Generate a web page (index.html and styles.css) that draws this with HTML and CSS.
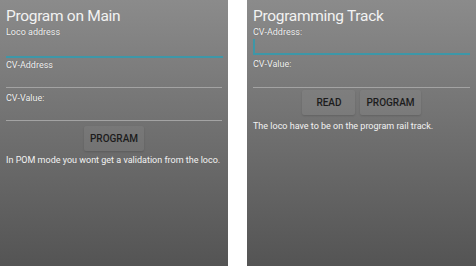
FILE: index.html
```html
<!DOCTYPE html>
<html lang="en">
<head>
    <meta charset="UTF-8">
    <meta name="viewport" content="width=device-width, initial-scale=1.0">
    <title>Programming</title>
    <link rel="stylesheet" href="styles.css">
</head>
<body>
    <div class="panel panel-main">
        <h1>Program on Main</h1>
        <label class="label">Loco address</label>
        <div class="field field-focus field-loco"></div>
        <label class="label">CV-Address</label>
        <div class="field field-cv"></div>
        <label class="label">CV-Value:</label>
        <div class="field field-cv"></div>
        <div class="buttons">
            <button class="btn btn-wide">PROGRAM</button>
        </div>
        <p class="note">In POM mode you wont get a validation from the loco.</p>
    </div>
    <div class="panel panel-track">
        <h1>Programming Track</h1>
        <label class="label">CV-Address:</label>
        <div class="field field-focus field-box"></div>
        <label class="label">CV-Value:</label>
        <div class="field field-short"></div>
        <div class="buttons buttons-track">
            <button class="btn">READ</button>
            <button class="btn btn-wide">PROGRAM</button>
        </div>
        <p class="note note-track">The loco have to be on the program rail track.</p>
    </div>
</body>
</html>
```

FILE: styles.css
```css
body {
    margin: 0;
    height: 266px;
    display: flex;
    gap: 19px;
    background-color: #fff;
    font-family: Roboto, 'Noto Sans', sans-serif;
    overflow: hidden;
}
.panel {
    display: flex;
    flex-direction: column;
    padding: 6px 6px 0 6px;
    background: linear-gradient(to bottom, #8b8b8b, #545454);
    color: #f2f2f2;
}
.panel-main {
    width: 216px;
}
.panel-track {
    flex: 1;
}
h1 {
    margin: 0;
    font-size: 15.5px;
    font-weight: 400;
    letter-spacing: -0.3px;
    line-height: 20px;
}
.label {
    display: block;
    font-size: 9px;
    line-height: 13px;
    text-shadow: 0 0 1px rgba(0,0,0,0.3);
}
.field {
    border-bottom: 1px solid #a3a3a3;
}
.field-focus {
    border-bottom: 2px solid #3d97a8;
}
.field-loco {
    height: 17px;
    margin-bottom: 1px;
    margin-right: -1px;
}
.field-cv {
    height: 15px;
    margin-bottom: 4px;
}
.field-box {
    height: 14px;
    border-left: 2px solid #3d97a8;
    margin-bottom: 3px;
}
.field-short {
    height: 16px;
}
.buttons {
    display: flex;
    justify-content: center;
    gap: 5px;
    margin-top: 1px;
}
.buttons-track {
    margin-top: 2px;
}
.btn {
    height: 25px;
    min-width: 53px;
    padding: 0 6px;
    border: none;
    border-radius: 2px;
    background-color: rgba(255,255,255,0.05);
    box-shadow: 0 1px 2px rgba(0,0,0,0.15);
    color: #1c1c1c;
    font-family: Roboto, sans-serif;
    font-size: 10px;
    font-weight: 500;
}
.btn-wide {
    min-width: 60px;
}
.note {
    margin: 3px 0 0 0;
    font-size: 9px;
    line-height: 13px;
    white-space: nowrap;
}
.note-track {
    margin-top: 5px;
}
```
